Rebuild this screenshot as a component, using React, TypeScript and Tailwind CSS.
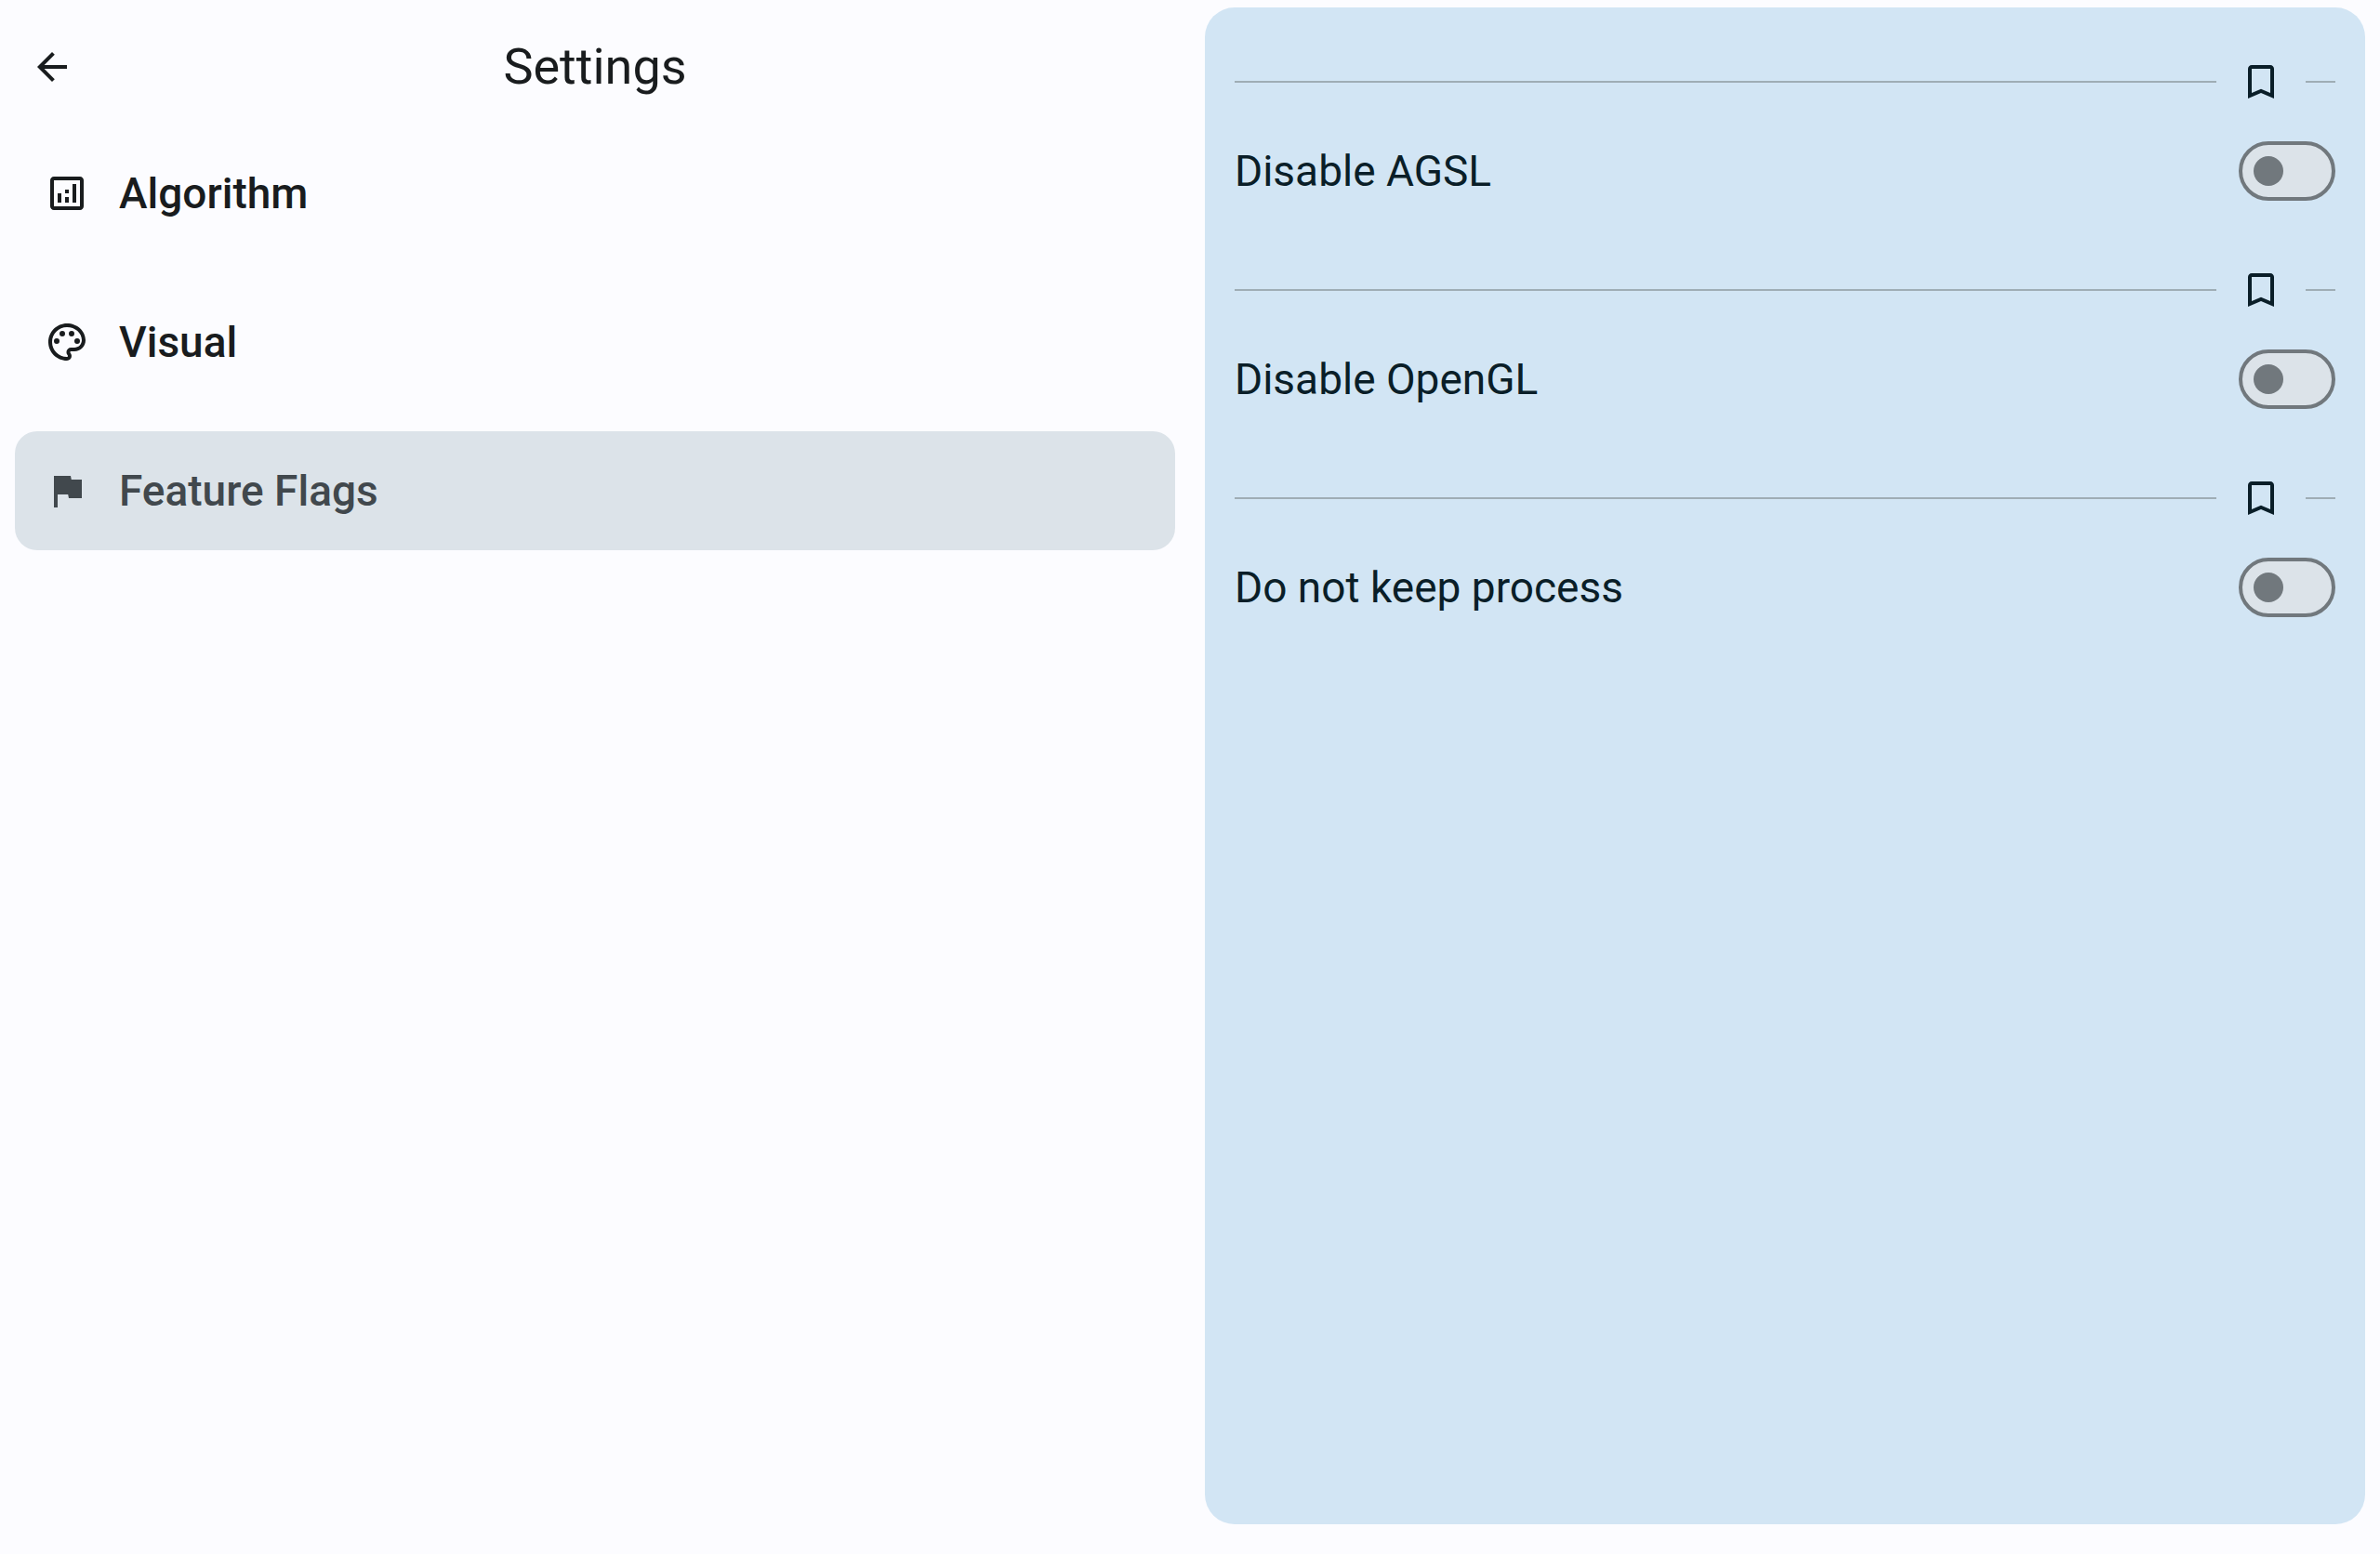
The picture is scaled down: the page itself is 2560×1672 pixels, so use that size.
import { useState } from "react";

const icons = {
  back: "M20 11H7.83l5.59-5.59L12 4l-8 8 8 8 1.41-1.41L7.83 13H20v-2z",
  analytics:
    "M19 3H5c-1.1 0-2 .9-2 2v14c0 1.1.9 2 2 2h14c1.1 0 2-.9 2-2V5c0-1.1-.9-2-2-2zm0 16H5V5h14v14zM7 12h2v5H7zM15 7h2v10h-2zM11 14h2v3h-2zM11 10h2v2h-2z",
  palette:
    "M12 22C6.49 22 2 17.51 2 12S6.49 2 12 2s10 4.04 10 9c0 3.31-2.69 6-6 6h-1.77c-.28 0-.5.22-.5.5 0 .12.05.23.13.33.41.47.64 1.06.64 1.67A2.5 2.5 0 0 1 12 22zm0-18c-4.41 0-8 3.59-8 8s3.59 8 8 8c.28 0 .5-.22.5-.5a.54.54 0 0 0-.14-.35c-.41-.46-.63-1.05-.63-1.65a2.5 2.5 0 0 1 2.5-2.5H16c2.21 0 4-1.79 4-4 0-3.86-3.59-7-8-7zM5 11.5a1.5 1.5 0 1 0 3 0a1.5 1.5 0 1 0-3 0zM8 7.5a1.5 1.5 0 1 0 3 0a1.5 1.5 0 1 0-3 0zM13 7.5a1.5 1.5 0 1 0 3 0a1.5 1.5 0 1 0-3 0zM16 11.5a1.5 1.5 0 1 0 3 0a1.5 1.5 0 1 0-3 0z",
  flag: "M14.4 6L14 4H5v17h2v-7h5.6l.4 2h7V6z",
  bookmark:
    "M17 3H7c-1.1 0-2 .9-2 2v16l7-3 7 3V5c0-1.1-.9-2-2-2zm0 15l-5-2.18L7 18V5h10v13z",
};

type IconName = keyof typeof icons;

function Icon({ name }: { name: IconName }) {
  return (
    <svg viewBox="0 0 24 24" className="size-12 shrink-0 fill-current" aria-hidden="true">
      <path d={icons[name]} />
    </svg>
  );
}

const sections: { label: string; icon: IconName }[] = [
  { label: "Algorithm", icon: "analytics" },
  { label: "Visual", icon: "palette" },
  { label: "Feature Flags", icon: "flag" },
];

const flags = [
  { id: "disable-agsl", label: "Disable AGSL" },
  { id: "disable-opengl", label: "Disable OpenGL" },
  { id: "do-not-keep-process", label: "Do not keep process" },
];

function FlagSetting({ id, label }: { id: string; label: string }) {
  return (
    <div className="pb-8">
      <div className="flex h-24 items-center">
        <div className="h-0.5 flex-1 bg-[#9fadb5]" />
        <button
          type="button"
          aria-label={`Bookmark ${label}`}
          className="flex size-24 items-center justify-center rounded-full"
        >
          <Icon name="bookmark" />
        </button>
        <div className="h-0.5 w-8 bg-[#9fadb5]" />
      </div>
      <div className="flex h-24 items-center justify-between gap-8">
        <label htmlFor={id} className="text-[46px] leading-16">
          {label}
        </label>
        <input
          id={id}
          type="checkbox"
          role="switch"
          className="flex h-16 w-26 shrink-0 appearance-none items-center rounded-full border-4 border-[#71787d] bg-[#dce3e9] px-3 before:size-8 before:rounded-full before:bg-[#71787d] before:content-[''] checked:justify-end checked:bg-[#d2e5f4]"
        />
      </div>
    </div>
  );
}

export default function App() {
  const [selected, setSelected] = useState("Feature Flags");

  return (
    <div className="grid min-h-screen grid-cols-2 bg-[#fcfcff] font-[Roboto,sans-serif] text-[#191c1e]">
      <div className="flex flex-col">
        <header className="grid h-36 grid-cols-[96px_1fr_96px] items-center px-2">
          <button
            type="button"
            aria-label="Back"
            className="flex size-24 items-center justify-center rounded-full"
          >
            <Icon name="back" />
          </button>
          <h1 className="text-center text-[54px] leading-16">Settings</h1>
        </header>
        <nav className="flex flex-col gap-8 px-4">
          {sections.map(({ label, icon }) => (
            <button
              key={label}
              type="button"
              aria-current={selected === label ? "page" : undefined}
              onClick={() => setSelected(label)}
              className="flex h-32 items-center gap-8 rounded-3xl px-8 text-left text-[46px] leading-16 font-medium aria-[current=page]:bg-[#dce3e9] aria-[current=page]:text-[#41484d]"
            >
              <Icon name={icon} />
              {label}
            </button>
          ))}
        </nav>
      </div>
      <main className="mx-4 mt-2 mb-8 rounded-4xl bg-[#d2e5f4] p-8 text-[#0a1e28]">
        {flags.map((flag) => (
          <FlagSetting key={flag.id} id={flag.id} label={flag.label} />
        ))}
      </main>
    </div>
  );
}
